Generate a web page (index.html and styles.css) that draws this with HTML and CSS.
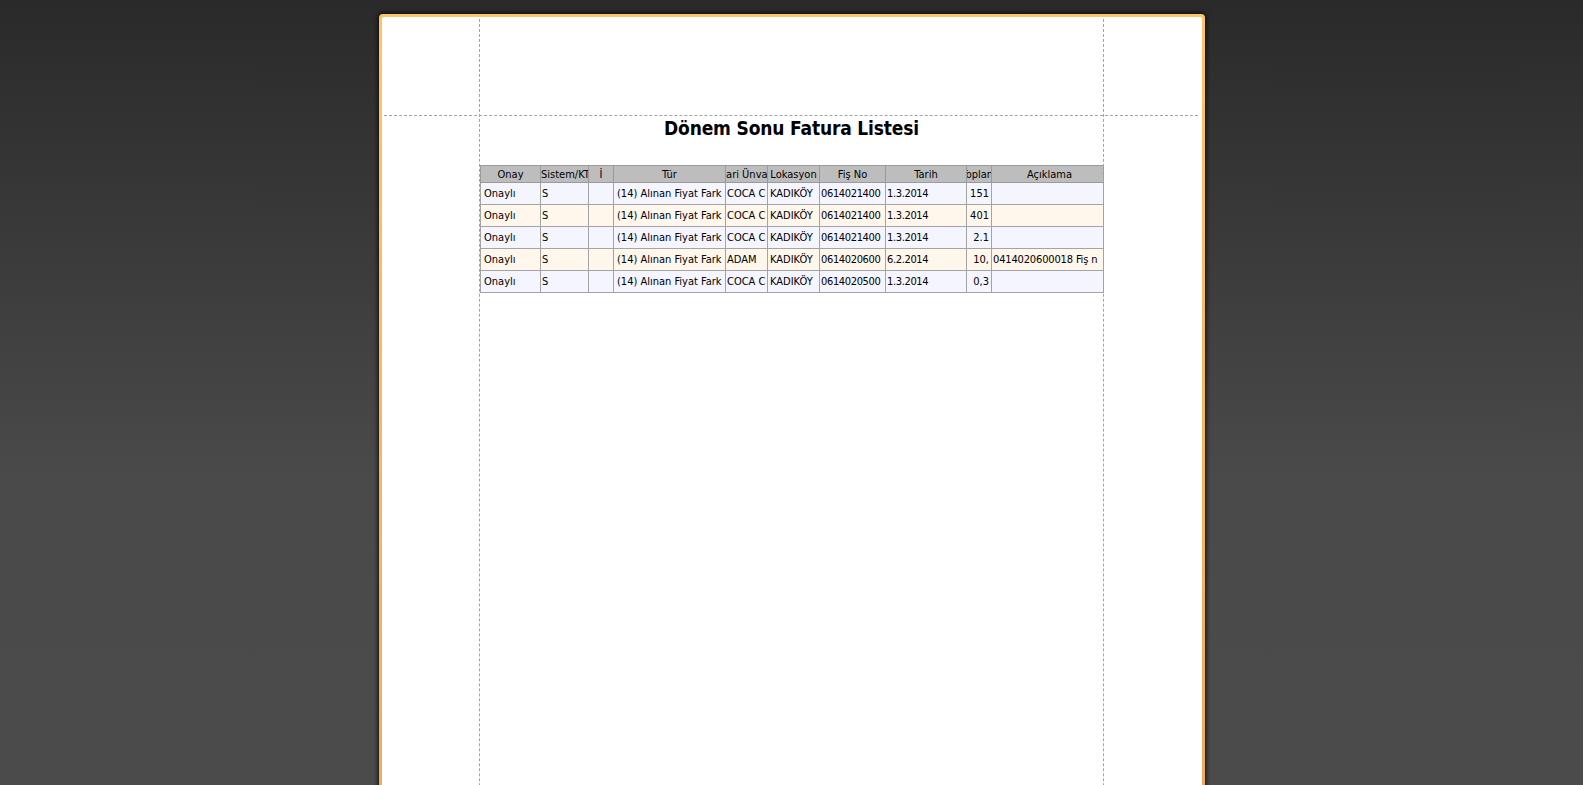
FILE: index.html
```html
<!DOCTYPE html>
<html lang="tr">
<head>
<meta charset="utf-8">
<title>Dönem Sonu Fatura Listesi</title>
<link rel="stylesheet" href="styles.css">
</head>
<body>
<main class="sheet">
  <div class="paper">
    <span class="guide guide-top"></span>
    <span class="guide guide-left"></span>
    <span class="guide guide-right"></span>
    <div class="content">
      <h1 class="title">Dönem Sonu Fatura Listesi</h1>
      <table class="report">
        <colgroup>
          <col class="c-onay"><col class="c-sistem"><col class="c-i"><col class="c-tur"><col class="c-cari"><col class="c-lok"><col class="c-fis"><col class="c-tarih"><col class="c-top"><col class="c-acik">
        </colgroup>
        <thead>
          <tr>
            <th><span class="head">Onay</span></th>
            <th><span class="head head-start">Sistem/KT</span></th>
            <th><span class="head">İ</span></th>
            <th><span class="head">Tür</span></th>
            <th><span class="head">Cari Ünvan</span></th>
            <th><span class="head">Lokasyon</span></th>
            <th><span class="head">Fiş No</span></th>
            <th><span class="head">Tarih</span></th>
            <th><span class="head">Toplam</span></th>
            <th><span class="head head-wide">Açıklama</span></th>
          </tr>
        </thead>
        <tbody>
          <tr><td>Onaylı</td><td>S</td><td></td><td>(14) Alınan Fiyat Fark</td><td>COCA C</td><td>KADIKÖY</td><td>0614021400</td><td>1.3.2014</td><td class="num">151</td><td></td></tr>
          <tr><td>Onaylı</td><td>S</td><td></td><td>(14) Alınan Fiyat Fark</td><td>COCA C</td><td>KADIKÖY</td><td>0614021400</td><td>1.3.2014</td><td class="num">401</td><td></td></tr>
          <tr><td>Onaylı</td><td>S</td><td></td><td>(14) Alınan Fiyat Fark</td><td>COCA C</td><td>KADIKÖY</td><td>0614021400</td><td>1.3.2014</td><td class="num">2.1</td><td></td></tr>
          <tr><td>Onaylı</td><td>S</td><td></td><td>(14) Alınan Fiyat Fark</td><td>ADAM</td><td>KADIKÖY</td><td>0614020600</td><td>6.2.2014</td><td class="num">10,</td><td>0414020600018 Fiş n</td></tr>
          <tr><td>Onaylı</td><td>S</td><td></td><td>(14) Alınan Fiyat Fark</td><td>COCA C</td><td>KADIKÖY</td><td>0614020500</td><td>1.3.2014</td><td class="num">0,3</td><td></td></tr>
        </tbody>
      </table>
    </div>
  </div>
</main>
</body>
</html>
```

FILE: styles.css
```css
html, body {
  margin: 0;
  height: 100%;
  overflow: hidden;
}

body {
  background: linear-gradient(#2a2a2a 0, #2e2e2e 60px, #4a4a4a 480px, #4b4b4b 100%);
  font-family: "DejaVu Sans Condensed", "DejaVu Sans", sans-serif;
  color: #000;
  display: flex;
  justify-content: flex-start;
  padding-left: 379px;
  box-sizing: border-box;
}

.sheet {
  width: 826px;
  height: 1100px;
  margin-top: 14px;
  padding: 3px;
  box-sizing: border-box;
  border-radius: 4px;
  background: linear-gradient(#fac66a 0, #f0aa5a 785px);
  box-shadow: 0 0 4px 1px #0c0c0c;
}

.paper {
  position: relative;
  height: 100%;
  background: #fff;
  border-radius: 2px;
}

.guide {
  position: absolute;
}

.guide-top {
  top: 98px;
  left: 2px;
  right: 4px;
  border-top: 1px dashed #a3a3a3;
}

.guide-left {
  top: 2px;
  bottom: 0;
  left: 97px;
  border-left: 1px dashed #a3a3a3;
}

.guide-right {
  top: 2px;
  bottom: 0;
  left: 721px;
  border-left: 1px dashed #a3a3a3;
}

.content {
  padding: 99px 0 0 98px;
  width: 623px;
  box-sizing: content-box;
}

.title {
  margin: 0;
  height: 49px;
  text-align: center;
  font-family: "DejaVu Sans Condensed", "DejaVu Sans", sans-serif;
  font-size: 19px;
  line-height: 25px;
  font-weight: 700;
  letter-spacing: -0.16px;
  color: #000;
}

.report {
  border-collapse: collapse;
  table-layout: fixed;
  width: 623px;
  font-size: 11px;
}

.c-onay { width: 60px; }
.c-sistem { width: 48px; }
.c-i { width: 25px; }
.c-tur { width: 112px; }
.c-cari { width: 42px; }
.c-lok { width: 52px; }
.c-fis { width: 66px; }
.c-tarih { width: 81px; }
.c-top { width: 25px; }
.c-acik { width: 112px; }

.report th,
.report td {
  border: 1px solid #a4a4a4;
  padding: 0 0 0 2px;
  overflow: hidden;
  white-space: nowrap;
  box-sizing: border-box;
}

.report th {
  height: 17px;
  padding: 1px 0 0;
  background: #bdbdbd;
  border-color: #9a9a9a;
  font-weight: 400;
  line-height: 14px;
}

.head {
  display: flex;
  justify-content: center;
}

.head-start {
  justify-content: flex-start;
}

.head-wide {
  padding-left: 4px;
}

.report td {
  height: 22px;
}

.report tbody tr:nth-child(odd) td {
  background: #f4f5ff;
}

.report tbody tr:nth-child(even) td {
  background: #fff6ec;
}

.report td:nth-child(1),
.report td:nth-child(4) {
  padding-left: 3px;
}

.report td:nth-child(2),
.report td:nth-child(5) {
  padding-left: 1px;
}

.report td:nth-child(7),
.report td:nth-child(8) {
  padding-left: 1px;
  letter-spacing: -0.35px;
}

.report td:nth-child(10) {
  padding-left: 1px;
  letter-spacing: -0.15px;
}

.report td.num {
  text-align: right;
  padding-right: 2px;
}
```
